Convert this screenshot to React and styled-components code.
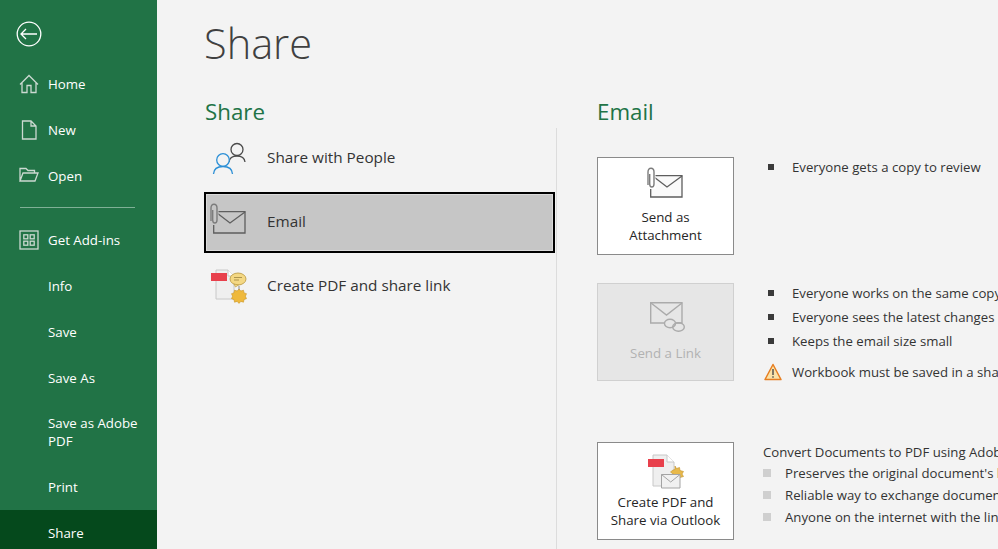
import React from "react";
import styled, { createGlobalStyle } from "styled-components";

const Global = createGlobalStyle`
  html, body { margin: 0; padding: 0; background: #f3f3f3; }
  body { font-family: "Open Sans", "Noto Sans", "Liberation Sans", sans-serif; overflow: hidden; }
  #root { width: 998px; height: 549px; overflow: hidden; }
`;

const Page = styled.div`
  display: flex;
  width: 998px;
  height: 549px;
  overflow: hidden;
  background: #f3f3f3;
  color: #262626;
`;

const Sidebar = styled.nav`
  flex: 0 0 157px;
  width: 157px;
  height: 549px;
  background: #217346;
  color: #fff;
  display: flex;
  flex-direction: column;
  overflow: hidden;
`;

const BackButton = styled.div`
  flex: 0 0 61px;
  box-sizing: border-box;
  padding: 21px 0 0 16px;
`;

const NavItem = styled.div`
  display: flex;
  align-items: center;
  min-height: ${(p) => (p.$tall ? 63 : 46)}px;
  padding-left: ${(p) => (p.$icon ? 19 : 48)}px;
  padding-right: 12px;
  padding-bottom: ${(p) => (p.$tall ? 1 : 0)}px;
  font-size: 13.3px;
  line-height: 18px;
  background: ${(p) => (p.$active ? "#05491c" : "transparent")};
  box-sizing: border-box;
  flex: 0 0 auto;
`;

const NavIcon = styled.span`
  width: 20px;
  height: 20px;
  margin-right: 9px;
  display: flex;
  align-items: center;
  justify-content: center;
`;

const NavRule = styled.hr`
  flex: 0 0 auto;
  border: 0;
  border-top: 1px solid #7fb096;
  margin: 8px 22px 9px 20px;
  height: 0;
`;

const Main = styled.main`
  flex: 1;
  min-width: 0;
  padding-left: 48px;
  display: flex;
  flex-direction: column;
`;

const Title = styled.h1`
  margin: 0 0 0 -1px;
  height: 96px;
  padding-top: 13px;
  box-sizing: border-box;
  font-size: 41.500px;
  line-height: 60px;
  font-weight: 300;
  color: #404040;
`;

const Columns = styled.div`
  display: flex;
  flex: 1;
  min-height: 0;
`;

const LeftColumn = styled.section`
  flex: 0 0 352px;
  width: 352px;
  display: flex;
  flex-direction: column;
`;

const SectionHead = styled.h2`
  margin: 0;
  height: 32px;
  font-size: 22.300px;
  line-height: 32px;
  font-weight: 400;
  color: #217346;
`;

const ListPane = styled.div`
  flex: 1;
  border-right: 1px solid #dcdcdc;
  display: flex;
  flex-direction: column;
`;

const ShareOption = styled.div`
  box-sizing: border-box;
  width: 351px;
  height: ${(p) => (p.$selected ? 61 : 64)}px;
  margin-left: ${(p) => (p.$selected ? -1 : 0)}px;
  display: flex;
  align-items: center;
  padding-left: ${(p) => (p.$selected ? 3 : 6)}px;
  font-size: 15.300px;
  color: #333;
  background: ${(p) => (p.$selected ? "#c6c6c6" : "transparent")};
  border: ${(p) => (p.$selected ? "2px solid #000" : "0")};
  box-shadow: ${(p) => (p.$selected ? "inset 0 0 0 1px #dadada" : "none")};
`;

const OptionIcon = styled.span`
  flex: 0 0 40px;
  width: 40px;
  height: 40px;
  margin-right: ${(p) => p.$gap || 16}px;
  display: block;
`;

const OptionLabel = styled.span`
  margin-bottom: ${(p) => p.$up || 0}px;
`;

const RightColumn = styled.section`
  flex: 1;
  min-width: 0;
  padding-left: 40px;
  display: flex;
  flex-direction: column;
  overflow: hidden;
`;

const ActionList = styled.div`
  display: flex;
  flex-direction: column;
  padding-top: 29px;
`;

const ActionRow = styled.div`
  display: flex;
  flex: 0 0 ${(p) => p.$h}px;
  white-space: nowrap;
`;

const ActionButton = styled.div`
  box-sizing: border-box;
  flex: 0 0 137px;
  width: 137px;
  height: 98px;
  display: flex;
  flex-direction: column;
  align-items: center;
  background: ${(p) => (p.$disabled ? "#e6e6e6" : "#fff")};
  border: 1px solid ${(p) => (p.$disabled ? "#d0d0d0" : "#8a8a8a")};
  color: ${(p) => (p.$disabled ? "#b2b2b2" : "#262626")};
  font-size: 13.300px;
  line-height: 18px;
  text-align: center;
  padding-top: ${(p) => p.$pt || 9}px;
`;

const ButtonIcon = styled.span`
  width: 40px;
  height: 40px;
  display: block;
  margin-bottom: ${(p) => p.$mb ?? 1}px;
`;

const Notes = styled.ul`
  list-style: none;
  margin: 0;
  padding: 0 0 0 ${(p) => p.$pl}px;
  font-size: 13.200px;
  line-height: 22px;
  color: #333;
`;

const Note = styled.li`
  display: flex;
  align-items: center;
  height: ${(p) => p.$h || 24}px;
  margin-top: ${(p) => p.$mt || 0}px;
`;

const Bullet = styled.span`
  flex: 0 0 ${(p) => (p.$light ? 8 : 6)}px;
  height: ${(p) => (p.$light ? 8 : 6)}px;
  background: ${(p) => (p.$light ? "#cfcfcf" : "#3a3a3a")};
  margin-right: ${(p) => p.$gap}px;
`;

const WarnIcon = styled.span`
  flex: 0 0 18px;
  width: 18px;
  height: 18px;
  margin-left: -4px;
  margin-right: 10px;
  display: block;
`;

const navStroke = "#cbd9d1";

const Back = () => (
  <svg width="26" height="26" viewBox="0 0 26 26" fill="none" stroke="#fff" strokeWidth="1.3" style={{ display: "block" }}>
    <circle cx="13" cy="13" r="11.800" />
    <path d="M21 13H5M10 8l-5 5 5 5" />
  </svg>
);
const Home = () => (
  <svg width="20" height="20" viewBox="0 0 20 20" fill="none" stroke={navStroke} strokeWidth="1.3">
    <path d="M1 10.500L10 1.500 19 10.500M3 8.500V18.500h5v-7h4v7h5V8.500" />
  </svg>
);
const NewDoc = () => (
  <svg width="20" height="20" viewBox="0 0 20 20" fill="none" stroke={navStroke} strokeWidth="1.3">
    <path d="M3.500 1H12l5 5V19H3.500ZM12 1v5h5" />
  </svg>
);
const Folder = () => (
  <svg width="20" height="20" viewBox="0 0 20 20" fill="none" stroke={navStroke} strokeWidth="1.3">
    <path d="M1 15V2.500h6l2 2h6.500V7M1 15l3-8h15l-3 8Z" />
  </svg>
);
const AddIns = () => (
  <svg width="20" height="20" viewBox="0 0 20 20" fill="none" stroke={navStroke} strokeWidth="1.3">
    <rect x="1" y="1" width="18" height="18" />
    <rect x="4.800" y="4.800" width="4" height="4" />
    <rect x="11.200" y="4.800" width="4" height="4" />
    <rect x="4.800" y="11.200" width="4" height="4" />
    <rect x="11.200" y="11.200" width="4" height="4" />
  </svg>
);
const People = () => (
  <svg width="40" height="40" viewBox="0 0 40 40" fill="none" strokeWidth="1.300">
    <circle cx="26" cy="9.500" r="6" stroke="#4a4a4a" />
    <path d="M18 22c.5-4 3.500-6 8-6s7.500 2 8 6" stroke="#4a4a4a" />
    <circle cx="12" cy="20" r="6.300" stroke="#2b8fd6" fill="#f3f3f3" />
    <path d="M2.500 34c.3-5 4-7.500 9.500-7.500s9.200 2.500 9.500 7.500" stroke="#2b8fd6" />
  </svg>
);
const MailClip = ({ bg }) => (
  <svg width="40" height="40" viewBox="0 0 40 40" fill="none">
    <path d="M4.700 8.700H36V30H4.700Z" fill={bg === "#fff" ? "#fafafa" : bg} stroke="#5e5e5e" strokeWidth="1.300" />
    <path d="M8 10L21 20 36 9" stroke="#5e5e5e" strokeWidth="1.300" />
    <rect x="0" y="0" width="9.500" height="22" fill={bg} />
    <path d="M2 18V5c0-2.500 1.200-3.800 3-3.800S8 2.500 8 5v12c0 1.800-.7 3-2.200 3S3.700 19 3.700 17V7" stroke="#7c7c7c" strokeWidth="1.400" />
  </svg>
);
const MailLink = () => (
  <svg width="40" height="40" viewBox="0 0 40 40" fill="none" stroke="#ababab" strokeWidth="1.400">
    <path d="M4.700 4.700H36V25H4.700Z" />
    <path d="M5 5L20.500 17 36 5" />
    <ellipse cx="24" cy="25.500" rx="5.500" ry="4.200" fill="#e6e6e6" />
    <ellipse cx="32.500" cy="29" rx="5.800" ry="4.200" />
  </svg>
);
const PdfShare = () => (
  <svg width="40" height="40" viewBox="0 0 40 40">
    <path d="M5 5H17L23 11V34H5Z" fill="#efefef" stroke="#c8c8c8" />
    <path d="M17 5V11H23" fill="#fff" stroke="#c8c8c8" />
    <rect x="0" y="8" width="16" height="8" fill="#e8404c" />
    <path d="M28 21V25" stroke="#8a8a8a" />
    <ellipse cx="27" cy="14" rx="8" ry="6" fill="#f4d884" stroke="#b9953a" strokeWidth=".8" />
    <path d="M23 19l1.500 3 3-2Z" fill="#f4d884" stroke="#b9953a" strokeWidth=".6" />
    <path d="M23 12.500h8M23 15h5" stroke="#9c8440" strokeWidth=".8" />
    <path d="M28 24l1.800 2 2.700-.8.500 2.700 2.500.8-1.100 2.500 1.100 2.500-2.500.8-.5 2.700-2.700-.8-1.800 2-1.800-2-2.700.8-.5-2.700-2.500-.8 1.100-2.500-1.100-2.500 2.500-.8.500-2.700 2.700.8Z" fill="#efb93c" stroke="#c79425" strokeWidth=".6" />
  </svg>
);
const PdfOutlook = () => (
  <svg width="40" height="40" viewBox="0 0 40 40">
    <path d="M7 3H21L28 10V34H7Z" fill="#efefef" stroke="#c8c8c8" />
    <path d="M21 3V10H28" fill="#fff" stroke="#c8c8c8" />
    <rect x="2" y="7" width="16" height="8" fill="#e8404c" />
    <path d="M29 14l1.500 2.500 3-1 .5 3 3.500 1-1.500 2.500 1.500 2.500-5 1.500-8-6 2.500-2 2-.5Z" fill="#e8b94a" stroke="#c2922c" strokeWidth=".6" />
    <path d="M15.500 22.500H34V36H15.500Z" fill="#f1f1f1" stroke="#a4a4a4" />
    <path d="M15.500 22.500L24.700 30 34 22.500" fill="none" stroke="#a4a4a4" />
  </svg>
);
const Warn = () => (
  <svg width="18" height="18" viewBox="0 0 18 18">
    <path d="M9 1.500L17 16.500H1Z" fill="#fbe3a8" stroke="#e67e22" strokeWidth="1.500" strokeLinejoin="round" />
    <path d="M9 6v6M9 13.200v1.600" stroke="#4a4a4a" strokeWidth="1.400" />
  </svg>
);

export default function App() {
  return (
    <Page>
      <Global />
      <Sidebar>
        <BackButton><Back /></BackButton>
        <NavItem $icon><NavIcon><Home /></NavIcon>Home</NavItem>
        <NavItem $icon><NavIcon><NewDoc /></NavIcon>New</NavItem>
        <NavItem $icon><NavIcon><Folder /></NavIcon>Open</NavItem>
        <NavRule />
        <NavItem $icon><NavIcon><AddIns /></NavIcon>Get Add-ins</NavItem>
        <NavItem>Info</NavItem>
        <NavItem>Save</NavItem>
        <NavItem>Save As</NavItem>
        <NavItem $tall>Save as Adobe PDF</NavItem>
        <NavItem>Print</NavItem>
        <NavItem $active>Share</NavItem>
      </Sidebar>
      <Main>
        <Title>Share</Title>
        <Columns>
          <LeftColumn>
            <SectionHead>Share</SectionHead>
            <ListPane>
              <ShareOption>
                <OptionIcon><People /></OptionIcon>
                <OptionLabel $up={6}>Share with People</OptionLabel>
              </ShareOption>
              <ShareOption $selected>
                <OptionIcon $gap={18}><MailClip bg="#c6c6c6" /></OptionIcon>
                <OptionLabel $up={4}>Email</OptionLabel>
              </ShareOption>
              <ShareOption>
                <OptionIcon><PdfShare /></OptionIcon>
                <OptionLabel>Create PDF and share link</OptionLabel>
              </ShareOption>
            </ListPane>
          </LeftColumn>
          <RightColumn>
            <SectionHead>Email</SectionHead>
            <ActionList>
              <ActionRow $h={126}>
                <ActionButton>
                  <ButtonIcon><MailClip bg="#fff" /></ButtonIcon>
                  <span>Send as<br />Attachment</span>
                </ActionButton>
                <Notes $pl={34}>
                  <Note $h={20}><Bullet $gap={18} />Everyone gets a copy to review</Note>
                </Notes>
              </ActionRow>
              <ActionRow $h={159}>
                <ActionButton $disabled $pt={14}>
                  <ButtonIcon $mb={6}><MailLink /></ButtonIcon>
                  <span>Send a Link</span>
                </ActionButton>
                <Notes $pl={34}>
                  <Note $mt={-2}><Bullet $gap={18} />Everyone works on the same copy of the workbook</Note>
                  <Note><Bullet $gap={18} />Everyone sees the latest changes</Note>
                  <Note><Bullet $gap={18} />Keeps the email size small</Note>
                  <Note $mt={7}><WarnIcon><Warn /></WarnIcon>Workbook must be saved in a shared location</Note>
                </Notes>
              </ActionRow>
              <ActionRow $h={98}>
                <ActionButton $pt={9}>
                  <ButtonIcon $mb={1}><PdfOutlook /></ButtonIcon>
                  <span>Create PDF and<br />Share via Outlook</span>
                </ActionButton>
                <Notes $pl={29}>
                  <Note $h={20}>Convert Documents to PDF using Adobe Acrobat</Note>
                  <Note $h={22}><Bullet $light $gap={14} />Preserves the original document's look and feel</Note>
                  <Note $h={22}><Bullet $light $gap={14} />Reliable way to exchange documents</Note>
                  <Note $h={22}><Bullet $light $gap={14} />Anyone on the internet with the link can view</Note>
                </Notes>
              </ActionRow>
            </ActionList>
          </RightColumn>
        </Columns>
      </Main>
    </Page>
  );
}
